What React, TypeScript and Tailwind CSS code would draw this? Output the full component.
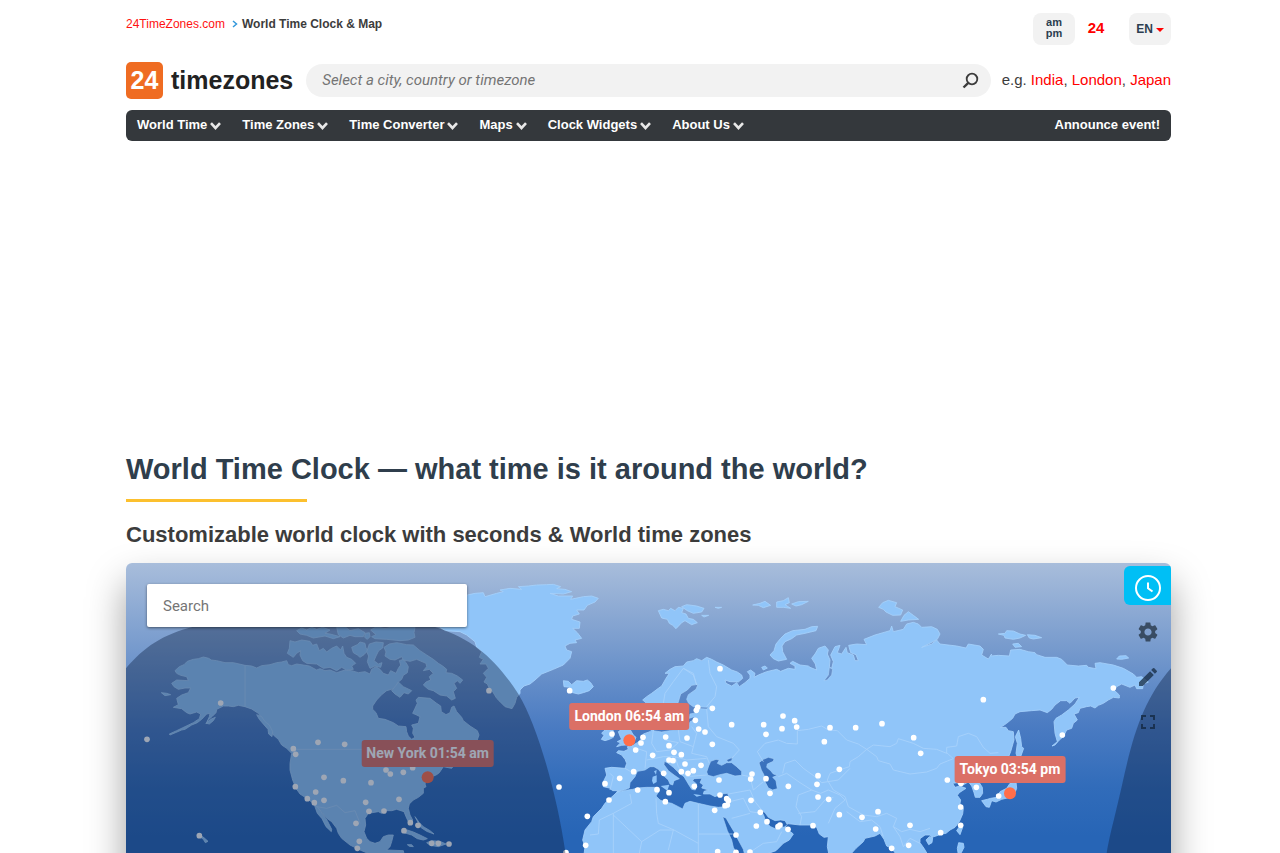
import React from 'react';
import { MdSettings, MdEdit, MdFullscreen } from 'react-icons/md';

// Map units: the visible map spans 3135 x 1560 starting at (48, 9).
const MAP_X = 48;
const MAP_Y = 9;
const MAP_W = 3135;
const MAP_H = 1560;
const VIEW_BOX = `${MAP_X} ${MAP_Y} ${MAP_W} ${MAP_H}`;

type Point = [number, number];

// Region origins inside the map; coordinates below are relative to these.
const PACIFIC: Point = [0, 0];
const AMERICA: Point = [480, 180];
const ATLANTIC: Point = [720, 0];
const EUROPE: Point = [1320, 0];
const ASIA: Point = [1920, 0];
const FAR_EAST: Point = [2580, 0];
const CHINA_SEA: Point = [2370, 540];

function points([dx, dy]: Point, list: string): Point[] {
  return list
    .trim()
    .split(/\s+/)
    .map((pair) => {
      const [x, y] = pair.split(',').map(Number);
      return [x + dx, y + dy];
    });
}

function line(...parts: Point[][]): string {
  return parts.flat().map((p) => p.join(',')).join(' ');
}

const LAND: string[] = [
  // North America
  line(
    points(PACIFIC, '195,332 208,320 222,314 232,304 250,298 265,296 280,291 296,295 304,300 320,302 345,308 370,308 405,316 425,318 440,324 455,317 480,314 500,308 515,306 530,302 535,314 545,317 560,312'),
    points(AMERICA, '100,135 118,138 140,150 150,146 165,152 180,150 200,158 225,150 245,152 265,158 285,155 300,162 305,148 318,140 330,148 340,160 355,165 362,152 378,160 385,145 392,135 388,122 400,118 408,128 415,140 412,158 400,166 395,178 385,186 375,205 350,212 335,224 320,240 308,258 308,268 318,278 325,295 345,298 370,308 385,318 408,320 410,335 415,348 425,358 435,352 428,340 430,325 425,315 445,310 450,290 438,284 428,280 435,265 442,250 438,240 445,232 480,235 500,250 512,258 514,275 528,284 540,278 545,262 552,258 560,275 575,292 580,302 600,318 622,332 627,345 620,365 600,380 560,395 540,410 548,422 560,425 545,445 520,440 508,458 500,464 482,472 468,484 465,492 468,500 460,505 460,520 445,532 430,540 418,552 415,565 420,585 428,600 425,610 415,605 408,590 402,575 380,568 365,572 345,572 335,580 325,575 295,580 285,595 287,615 282,635 290,655 300,665 315,670 330,665 340,650 355,645 370,645 365,665 360,680 350,690 400,692 410,740 430,790 470,800'),
    points(AMERICA, '560,770 680,830 790,900 860,960 920,1040 880,1160 800,1260 720,1390 560,1390 540,1180 470,1040 450,940 480,860 420,810 380,750 330,715 270,690 240,675 215,655 205,640 200,625 185,605 170,595 150,570 130,550 110,535 90,522 78,505 68,480 60,450 60,430 65,400 50,385 35,375 25,358 10,345 0,325'),
    points(PACIFIC, '470,498 460,480 445,460 425,447 405,440 385,436 370,440 355,438 340,438 320,448 318,458 308,468 295,480 288,492 298,470 300,460 290,462 275,478 262,488 245,495 225,508 215,510 180,525 178,522 200,512 225,500 250,488 268,476 272,462 260,456 240,462 230,458 215,446 190,442 205,434 200,415 215,405 235,398 242,384 225,384 205,388 192,380 185,370 200,360 235,362 230,350 212,346 200,340'),
  ),
  line(points(AMERICA, '132,552 145,564 160,585 172,602 185,628 184,635 168,620 156,596 142,580')),
  line(points(AMERICA, '60,62 75,66 95,60 120,64 128,76 140,72 148,92 160,85 170,96 185,85 200,78 212,90 218,78 222,100 230,112 245,118 257,130 245,138 250,148 230,150 215,142 200,152 180,142 160,145 140,132 110,130 98,122 90,105 92,92 80,100 70,112 52,100 58,85')),
  line(points(AMERICA, '342,82 358,72 380,68 410,74 430,75 450,92 470,105 490,118 505,130 518,138 530,148 528,158 545,160 562,168 578,180 570,190 562,182 552,190 560,205 550,215 556,235 545,240 530,228 510,225 490,212 475,208 460,195 468,186 482,180 478,170 490,160 478,148 460,152 470,140 468,130 440,118 420,124 400,120 395,110 375,120 360,118 345,108 348,96')),
  line(points(AMERICA, '80,32 95,24 110,30 125,22 140,28 158,22 180,30 165,40 180,42 210,50 190,56 165,48 130,54 110,46 90,42')),
  line(points(AMERICA, '200,22 225,20 240,32 265,26 285,38 280,50 255,50 240,46 220,54 205,44')),
  line(points(AMERICA, '302,30 320,20 345,26 370,20 435,22 432,38 435,52 415,60 390,62 350,58 315,56 305,50 318,44')),
  line(points(AMERICA, '245,82 262,74 270,66 285,70 288,85 295,90 282,104 270,112 262,105 250,98')),
  line(points(AMERICA, '298,72 318,66 340,68 338,84 326,92 318,108 312,122 325,132 336,128 332,142 315,138 300,145 292,125 296,108 290,95')),
  line(points(AMERICA, '365,212 378,196 385,186 400,200 425,212 415,222 402,218 390,232 375,222')),
  line(points(AMERICA, '286,40 298,38 300,50 292,58 284,52')),
  line(points(AMERICA, '395,636 412,630 430,636 450,645 472,656 460,660 442,656 425,645 408,640')),
  line(points(AMERICA, '470,668 485,662 510,664 528,672 505,680 480,676')),
  line(points(AMERICA, '435,590 448,608 460,620 480,632 492,642 470,634 452,622')),
  line(points(AMERICA, '412,674 425,674 430,680 418,679')),
  line(points(PACIFIC, '262,824 272,826 283,834 294,844 286,848 280,838')),
  line(points(PACIFIC, '154,398 170,400 182,404 165,407')),
  line(points(PACIFIC, '290,490 302,478 316,472 310,482 298,492')),
  line(points(PACIFIC, '440,464 455,470 465,485 478,495 488,515 486,530 476,522 474,508 460,492 448,478')),
  // Greenland and Iceland
  line(points(ATLANTIC, '250,150 300,110 352,105 375,100 400,98 405,110 440,100 460,95 450,90 480,85 515,88 505,80 535,78 560,75 590,74 610,73 632,80 620,86 645,88 665,95 640,102 600,100 625,108 668,108 662,118 700,110 725,108 745,115 735,126 712,136 702,150 680,150 688,162 668,168 665,178 690,186 688,205 668,205 682,218 695,235 675,240 680,248 660,250 645,258 650,270 665,275 660,295 640,315 610,328 575,342 555,360 540,372 522,378 510,390 510,400 500,412 495,430 486,446 465,440 450,425 440,415 428,395 418,385 412,372 402,366 410,352 400,340 415,325 408,312 390,312 400,298 388,292 395,275 380,262 375,245 350,225 330,215 285,212 240,180')),
  line(points(ATLANTIC, '640,362 655,364 665,374 680,362 700,364 712,360 722,368 730,380 718,392 700,398 685,402 668,398 652,392 660,382 642,380')),
  // Eurasia and Africa
  line(
    points(EUROPE, '100,960 92,930 100,900 105,860 98,840 105,810 125,785 130,770 155,745 165,730 175,720 192,705 205,692 188,692 178,684 160,680 160,665 170,645 165,625 185,622 225,625 230,610 225,598 215,585 200,578 205,572 222,574 235,568 232,560 245,558 262,548 272,540 280,522 300,515 310,505 300,450 290,430 278,420 290,410 305,400 325,385 335,378 348,355 358,340 345,340 360,328 375,320 400,318 410,306 430,302 440,296 455,302 470,292 485,298 500,306 520,315 545,330 562,336 575,345 578,355 565,366 540,365 525,360 528,370 545,378 560,368 568,380 585,368 600,355 600,345 592,335 602,330 615,340 612,352 625,345 650,335 680,328 692,334 715,325 735,328 735,318 720,310 728,304 750,315 775,318'),
    points(ASIA, '180,322 200,330 196,312 185,295 195,282 205,265 225,258 235,270 232,282 240,300 238,322 245,325 250,305 242,285 255,260 270,256 262,278 275,282 288,262 292,278 310,285 315,302 325,302 318,284 302,278 296,256 320,252 350,254 342,238 375,225 420,212 425,198 430,215 460,208 470,192 490,187 505,192 515,202 545,200 562,208 570,222 562,238 535,252 515,262 545,252 560,240 570,252 620,258 648,264 655,252 690,258 700,268 695,285 715,297 725,282'),
    points(FAR_EAST, '62,288 85,286 118,288 122,270 150,268 175,275 195,278 200,284 225,292 260,292 275,298 292,315 325,318 350,316 355,322 378,326 375,310 390,308 430,315 460,325 490,342 500,352 515,350 535,366 520,372 518,386 500,386 495,375 480,382 455,372 440,380 432,390 448,405 448,414 430,412 415,420 400,430 385,436 375,444 362,438 350,440 330,445 325,458 312,462 322,480 310,490 305,505 290,510 280,530 268,540 255,555 246,558 262,545 255,520 252,485 258,475 275,465 295,450 315,432 328,412 315,414 300,430 290,422 272,422 255,435 245,448 232,458 210,450 185,452 150,455 135,462 128,475 110,490 92,502 108,502 115,512 130,515 132,540 122,575 112,600 85,625 50,645'),
    points(CHINA_SEA, '225,110 238,128 247,142 248,160 240,172 226,172 222,158 215,138 205,125 198,130 180,140 172,128 158,130 165,142 180,138 198,145 178,158 172,166 182,180 180,190 190,205 188,222 178,245 165,262 150,270 138,280 125,282 108,288 95,292 90,285 75,285 60,296 60,308 72,325 84,345'),
    points(ASIA, '550,920 545,960 520,990 505,950 480,960 500,1050 478,1030 455,950 450,915 440,885 425,865 410,858 402,838 390,820 375,828 345,835 340,845 318,865 300,885 290,960 270,1000 250,960 238,890 232,860 235,830 222,832 208,822 200,802 185,795 150,795 105,790 108,805 130,822 118,840 100,850 78,872 50,882'),
    points(EUROPE, '630,900 590,925 650,925 600,1020 540,1120 545,1250 460,1420 410,1520 350,1510 310,1300 290,1120 270,1060 200,1020 140,1020'),
  ),
  line(points(EUROPE, '205,515 215,508 240,508 250,525 258,532 252,545 238,554 215,556 200,560 212,548 202,545 215,538 210,528')),
  line(points(EUROPE, '162,512 175,508 190,512 190,532 178,538 165,542 154,538 162,526 155,520')),
  line(points(EUROPE, '325,152 340,148 355,152 362,145 375,152 385,142 400,145 395,158 408,162 415,175 430,178 442,188 425,194 405,182 395,188 378,206 368,196 358,190 352,178 335,174')),
  line(points(EUROPE, '395,140 410,134 440,138 462,145 455,156 430,160 412,152')),
  line(points(EUROPE, '608,135 630,130 645,124 662,136 640,143 625,136')),
  line(points(EUROPE, '680,126 700,122 715,113 718,128 705,134 722,145 700,142 680,142')),
  line(points(EUROPE, '725,132 745,125 775,124 755,134 738,138')),
  line(points(EUROPE, '635,322 645,318 652,324 640,330')),
  line(points(EUROPE, '495,142 515,142 505,145')),
  line(points(EUROPE, '455,166 476,166 462,171')),
  line(points(ASIA, '60,285 72,272 78,252 92,235 105,222 128,212 165,208 185,200 203,199 198,212 165,220 140,225 125,236 105,245 96,258 98,275 110,298 85,303 70,296')),
  line(points(ASIA, '386,142 398,128 415,121 440,128 435,140 458,150 452,165 428,166 408,156 400,148')),
  line(points(ASIA, '452,184 462,166 475,155 490,166 506,178 475,180')),
  line(points(FAR_EAST, '85,222 105,220 110,212 130,213 150,222 167,226 150,234 130,238 105,234 102,226')),
  line(points(FAR_EAST, '172,224 195,226 215,233 190,237 178,234')),
  line(points(FAR_EAST, '128,252 145,250 155,260 135,262')),
  line(points(FAR_EAST, '440,297 448,288 468,287 476,294 455,298')),
  line(points(FAR_EAST, '146,510 152,535 155,560 161,565 152,590 145,600 138,580 142,550 136,530')),
  line(points(CHINA_SEA, '245,182 262,178 272,175 290,172 300,155 320,145 330,130 348,125 350,145 345,158 330,172 305,178 288,186 275,182 268,202 258,200')),
  line(points(CHINA_SEA, '170,272 178,260 188,262 180,284')),
  line(points(CHINA_SEA, '172,325 176,308 190,310 192,322 184,338 192,350 175,345')),
  line(points(CHINA_SEA, '78,300 88,290 98,293 96,308 86,314')),
];

const WATER: string[] = [
  // Mediterranean
  line(points(EUROPE, '200,696 222,692 232,690 248,688 262,684 290,682 322,682 328,692 318,708 330,720 345,726 365,730 385,740 398,747 405,730 420,724 445,730 480,738 505,742 525,740 534,725 538,712 532,700 515,702 495,710 480,702 460,702 462,694 475,690 455,684 460,675 450,668 456,655 432,656 428,662 440,672 436,690 425,688 415,672 402,650 388,640 370,622 352,608 343,604 342,614 355,632 372,645 388,656 372,662 368,675 360,672 355,660 342,648 325,628 312,620 300,620 285,630 262,634 255,650 240,668 238,684 222,690')),
  // Black Sea
  line(points(EUROPE, '470,636 476,618 482,604 498,598 508,600 502,610 515,616 530,608 545,608 560,620 575,634 575,646 555,648 530,640 510,644 490,650 474,646')),
  line(points(EUROPE, '528,600 548,592 545,602 536,606')),
  // Caspian Sea
  line(points(EUROPE, '627,608 640,598 655,592 672,596 670,604 652,612 650,622 662,632 670,642 682,646 668,652 678,662 682,686 668,690 655,684 645,665 642,645 634,630')),
  // Baltic Sea
  line(points(EUROPE, '383,432 392,402 412,390 425,376 444,373 438,388 415,404 410,418 416,430 430,440 475,442 470,447 450,446 440,458 420,462 418,475 432,470 432,480 420,485 415,502 400,510 360,512 335,516 310,512 330,470')),
  // Red Sea
  line(points(EUROPE, '518,770 528,774 540,795 552,815 565,840 580,868 588,900 595,925 575,925 565,890 550,862 545,840 532,812')),
  // Persian Gulf
  line(points(EUROPE, '632,748 645,758 655,772 675,782 692,780 705,782 712,794 702,802 690,798 680,808 662,800 648,788 642,768')),
  // Ob Gulf
  line(points(ASIA, '238,322 248,328 245,345 232,360 222,362 235,345')),
];

const ISLANDS: string[] = [
  line(points(EUROPE, '308,650 320,646 320,666 310,672 306,662')),
  line(points(EUROPE, '312,634 320,630 318,644')),
  line(points(EUROPE, '332,678 358,674 352,692')),
  line(points(EUROPE, '430,702 456,706 440,710')),
  line(points(EUROPE, '500,702 522,700 508,711')),
];

const BORDERS: string[] = [
  line(points(PACIFIC, '405,316 405,440')),
  line(points(PACIFIC, '550,568 800,568 860,600 900,620')),
  line(points(PACIFIC, '620,740 650,745 680,736 705,758 735,752 750,790')),
  line(points(ASIA, '350,568 325,590 300,605 298,620 268,630 240,640 232,660 250,690 285,710')),
  line(points(ASIA, '350,568 380,590 385,602 420,612 430,630 480,642 530,636 560,625 570,612 610,596 590,578')),
  line(points(ASIA, '350,568 370,555 420,560 440,550 445,536 490,550 520,565 560,568 590,580 590,562 620,558 625,530 655,520 680,530 700,562 720,580 745,578')),
  line(points(ASIA, '40,605 22,575 45,550 85,540 110,550 142,552 142,512 175,508 215,498 235,510 262,512 290,540 325,552 350,568')),
  line(points(ASIA, '98,640 105,610 135,600 160,625 195,650 215,668 265,660 300,625')),
  line(points(ASIA, '85,650 110,640 150,668 185,690 212,700 235,690 270,705 285,720 255,745 235,790')),
  line(points(ASIA, '150,795 155,770 138,740 145,705 185,690')),
  line(points(ASIA, '145,760 195,755 225,720 250,712')),
  line(points(ASIA, '285,710 295,740 340,765 380,770 410,760 440,775 430,800 455,815')),
  line(points(ASIA, '290,755 330,785 365,780 390,800 400,830')),
  line(points(ASIA, '430,800 450,830 460,860 480,835 510,850')),
  line(points(ASIA, '455,815 480,808 510,815 540,805')),
  line(points(EUROPE, '190,760 190,880')),
  line(points(EUROPE, '120,825 145,822 148,780 190,760 245,730 240,702')),
  line(points(EUROPE, '318,715 320,760 325,790 372,810 445,850')),
  line(points(EUROPE, '445,732 445,879')),
  line(points(EUROPE, '445,822 548,822')),
  line(points(EUROPE, '190,765 275,845 330,810 372,810')),
  line(points(EUROPE, '355,870 370,810')),
  line(points(EUROPE, '275,845 268,880')),
  line(points(EUROPE, '340,430 345,400 370,365 400,325 430,340 440,375')),
  line(points(EUROPE, '440,375 430,345 400,325')),
  line(points(EUROPE, '475,300 480,340 500,380 495,410 470,440')),
  line(points(EUROPE, '470,447 475,500 500,530 550,550 568,570 545,595')),
  line(points(EUROPE, '385,510 390,545 430,560 440,520 425,500')),
  line(points(EUROPE, '430,560 425,580 470,590 478,610')),
  line(points(EUROPE, '310,510 305,550 320,575 360,570 385,548 345,540')),
  line(points(EUROPE, '245,560 290,575 285,625')),
  line(points(EUROPE, '290,600 340,590 375,590 410,600 470,595')),
  line(points(EUROPE, '375,590 385,620 410,650 470,645')),
  line(points(EUROPE, '225,625 255,642')),
  line(points(EUROPE, '180,640 190,650 180,690')),
  line(points(EUROPE, '575,645 600,650 610,690 640,665')),
  line(points(EUROPE, '535,702 600,690 615,725 635,750')),
  line(points(EUROPE, '540,725 580,715 600,755 635,760')),
  line(points(EUROPE, '545,775 600,760')),
  line(points(EUROPE, '595,880 640,850 680,845 695,815')),
];

const CITIES: Point[] = [
  ...points(PACIFIC, '332,429 111,538 550,566 557,583 624,547 704,553 556,680 642,652 700,662 617,696 592,716 613,728 642,721 738,790 748,844 742,865 767,727 268,827'),
  ...points(AMERICA, '297,574 342,573 387,538 303,488 348,450 361,462 400,457 428,443 421,608 444,616 402,632 485,670 505,670 537,672'),
  ...points(ATLANTIC, '417,392 659,392 627,681 712,769 707,856 648,878'),
  ...points(EUROPE, '510,326 443,442 439,451 487,445 436,481 446,507 465,516 545,494 641,494 699,468 734,482 696,506 740,501 648,523 487,553 186,522 279,532 273,549 257,570 308,586 347,531 411,534 357,557 372,577 394,584 357,600 369,602 405,612 453,616 394,635 414,640 430,632 341,640 251,635 209,655 165,671 263,690 321,689 357,698 346,725 177,720 433,679 507,660 510,705 530,716 535,722 532,735 525,737 494,751 606,642 602,657 648,656 603,721 660,700 715,679 631,757 651,785 619,798 684,800 690,795 714,808 558,825 503,875 558,877 600,876'),
  ...points(ASIA, '240,503 317,503 396,491 223,545 491,533 512,580 700,419 268,628 204,647 201,673 204,711 236,718 268,764 336,772 384,755 377,807 189,797 480,796 476,856 425,865 572,818 592,660 632,741 632,796 633,670 679,682 746,708'),
  ...points(FAR_EAST, '430,384 277,525'),
];

const PINS = [
  { label: 'New York 01:54 am', x: 953, y: 652 },
  { label: 'London 06:54 am', x: 1558, y: 541 },
  { label: 'Tokyo 03:54 pm', x: 2700, y: 700 },
];

const MENU = ['World Time', 'Time Zones', 'Time Converter', 'Maps', 'Clock Widgets', 'About Us'];

function WorldMap() {
  return (
    <svg viewBox={VIEW_BOX} className="absolute inset-0 size-full" aria-hidden="true">
      <defs>
        <linearGradient id="ocean" gradientUnits="userSpaceOnUse" x1="0" y1="9" x2="0" y2="829">
          <stop offset="0" stopColor="#a8bddb" />
          <stop offset="0.36" stopColor="#6f95cb" />
          <stop offset="0.6" stopColor="#4a7bc2" />
          <stop offset="0.82" stopColor="#316cba" />
          <stop offset="1" stopColor="#2765b6" />
        </linearGradient>
      </defs>
      <rect x={MAP_X} y={MAP_Y} width={MAP_W} height={MAP_H} fill="url(#ocean)" />
      <g fill="#90c5f9" stroke="#a6d1fb" strokeWidth="2.5" strokeLinejoin="round">
        {LAND.map((p, i) => <polygon key={i} points={p} />)}
      </g>
      <g fill="url(#ocean)" stroke="#a6d1fb" strokeWidth="2" strokeLinejoin="round">
        {WATER.map((p, i) => <polygon key={i} points={p} />)}
      </g>
      <g fill="#90c5f9">
        {ISLANDS.map((p, i) => <polygon key={i} points={p} />)}
      </g>
      <g fill="none" stroke="#aad3fb" strokeWidth="2.5" strokeLinejoin="round">
        {BORDERS.map((p, i) => <polyline key={i} points={p} />)}
      </g>
      <g fill="#fff">
        {CITIES.map(([x, y], i) => <circle key={i} cx={x} cy={y} r="8.5" />)}
      </g>
      <g fill="#ff6e4a">
        {PINS.map((pin) => <circle key={pin.label} cx={pin.x} cy={pin.y} r="18" />)}
      </g>
    </svg>
  );
}

function Night() {
  return (
    <svg viewBox={VIEW_BOX} className="pointer-events-none absolute inset-0 size-full" aria-hidden="true">
      <g fill="#0c2143" fillOpacity="0.4">
        <path d="M48 325 C100 262 160 222 250 200 C380 165 480 160 616 160 C760 160 880 168 982 203 C1090 238 1160 300 1225 402 C1290 510 1345 730 1365 870 L1440 1569 L48 1569 Z" />
        <path d="M3183 325 C3100 420 3070 520 3035 680 C3010 790 3000 820 2990 880 L2920 1569 L3183 1569 Z" />
      </g>
    </svg>
  );
}

function Chevron() {
  return (
    <svg viewBox="0 0 11 8" className="mt-[2px] h-2 w-[11px]" fill="none" stroke="#e8e8e8" strokeWidth="2.6" aria-hidden="true">
      <path d="M1 1.2 L5.5 6 L10 1.2" />
    </svg>
  );
}

export default function App() {
  return (
    <div className="bg-white pl-[17px] font-['Liberation_Sans',sans-serif] text-[#3c3c3c]">
      <div className="mx-auto max-w-[1045px]">
        <div className="flex items-start justify-between pt-[13px]">
          <nav aria-label="Breadcrumb" className="flex items-center pt-1 text-[12px] leading-[14px]">
            <a href="#" className="text-[#f11]">24TimeZones.com</a>
            <svg viewBox="0 0 6 8" className="mr-1 ml-[7px] h-2 w-[6px]" fill="none" stroke="#3498db" strokeWidth="1.5" aria-hidden="true">
              <path d="M1 1 L4.5 4 L1 7" />
            </svg>
            <span className="font-bold">World Time Clock &amp; Map</span>
          </nav>
          <div className="flex h-8 items-stretch text-[#2c3e50]">
            <button type="button" className="w-[42px] rounded-lg bg-[#f2f2f2] pb-[2px] text-[11px] leading-[11px] font-bold">am<br />pm</button>
            <button type="button" className="w-[42px] pb-[2px] text-[15px] font-bold text-[#f00]">24</button>
            <button type="button" className="ml-3 flex w-[42px] items-center justify-center gap-[3px] rounded-lg bg-[#f2f2f2] text-[12px] font-bold">
              EN
              <svg viewBox="0 0 8 4" className="mt-[2px] h-1 w-2 fill-[#f00]" aria-hidden="true"><path d="M0 0 H8 L4 4 Z" /></svg>
            </button>
          </div>
        </div>

        <header className="mt-[17px] flex items-center">
          <a href="#" className="flex items-center gap-2 text-[25px] leading-[37px] font-bold text-[#222]">
            <span className="flex size-[37px] items-center justify-center rounded-[5px] bg-[#ef6c22] text-white">24</span>
            timezones
          </a>
          <form className="ml-[13px] flex h-[33px] grow items-center rounded-full bg-[#f2f2f2] pr-3 pl-4" onSubmit={(e) => e.preventDefault()}>
            <input aria-label="Select a city, country or timezone" placeholder="Select a city, country or timezone" className="min-w-0 grow bg-transparent font-['Roboto',sans-serif] text-[15px] italic outline-none placeholder:text-[#757575]" />
            <button type="submit" aria-label="Search">
              <svg viewBox="0 0 18 18" className="size-[18px]" fill="none" stroke="#3c3c3c" strokeWidth="1.8" aria-hidden="true">
                <circle cx="11" cy="7" r="5.3" />
                <path d="M7.3 10.8 L2.5 15.5" strokeWidth="2.4" />
              </svg>
            </button>
          </form>
          <p className="ml-[11px] text-[15px] whitespace-nowrap">
            e.g. <a href="#" className="text-[#f00]">India</a>, <a href="#" className="text-[#f00]">London</a>, <a href="#" className="text-[#f00]">Japan</a>
          </p>
        </header>

        <nav aria-label="Main" className="mt-[11px] flex h-[31px] items-center justify-between rounded-md bg-[#34383c] px-[11px] pb-[2px] text-[13px] leading-[16px] font-bold text-white">
          <ul className="flex gap-[21px]">
            {MENU.map((item) => (
              <li key={item}>
                <a href="#" className="flex items-center gap-[3px]">
                  {item}
                  <Chevron />
                </a>
              </li>
            ))}
          </ul>
          <a href="#">Announce event!</a>
        </nav>

        <main className="pt-[308px]">
          <h1 className="text-[29px] leading-[40px] font-bold text-[#2f3e4c]">World Time Clock — what time is it around the world?</h1>
          <div className="mt-[10px] h-[3px] w-[181px] bg-[#fcc02e]" />
          <h2 className="mt-[21px] text-[22px] leading-6 font-bold">Customizable world clock with seconds &amp; World time zones</h2>

          <section aria-label="World map" className="relative mt-4 aspect-[3135/1560] overflow-hidden rounded-md shadow-[0_20px_38px_rgba(0,0,0,0.38)]">
            <WorldMap />
            {PINS.map((pin) => (
              <div
                key={pin.label}
                className="absolute -translate-x-1/2 -translate-y-full pb-[10px]"
                style={{ left: `${((pin.x - MAP_X) / MAP_W) * 100}%`, top: `${((pin.y - MAP_Y) / MAP_H) * 100}%` }}
              >
                <div className="rounded-[3px] bg-[#db7066] px-[5px] font-['Roboto',sans-serif] text-[14px] leading-[27px] font-bold whitespace-nowrap text-white">{pin.label}</div>
              </div>
            ))}
            <Night />
            <div className="absolute top-[21px] left-[21px] w-80">
              <input aria-label="Search the map" placeholder="Search" className="h-[43px] w-full rounded-[2px] bg-white px-4 font-['Roboto',sans-serif] text-[15px] shadow-[0_1px_3px_rgba(0,0,0,0.5)] outline-none placeholder:text-[#757575]" />
            </div>
            <div className="absolute top-[3px] right-0 flex w-[47px] flex-col text-[#102236]/70">
              <button type="button" aria-label="Clock" className="flex h-[39px] items-center justify-center rounded-l-md bg-[#00bff5] pt-1 text-white">
                <svg viewBox="0 0 26 26" className="size-[26px]" fill="none" stroke="currentColor" strokeWidth="2" aria-hidden="true">
                  <circle cx="13" cy="13" r="12" />
                  <path d="M13 7.5 V13.3 L17.5 16.5" />
                </svg>
              </button>
              <button type="button" aria-label="Settings" className="mt-1 flex h-[45px] items-center justify-center text-[#22303f]/75"><MdSettings className="size-6" /></button>
              <button type="button" aria-label="Edit" className="flex h-[45px] items-center justify-center"><MdEdit className="size-6" /></button>
              <button type="button" aria-label="Full screen" className="flex h-[45px] items-center justify-center"><MdFullscreen className="size-6" /></button>
            </div>
          </section>
        </main>
      </div>
    </div>
  );
}
